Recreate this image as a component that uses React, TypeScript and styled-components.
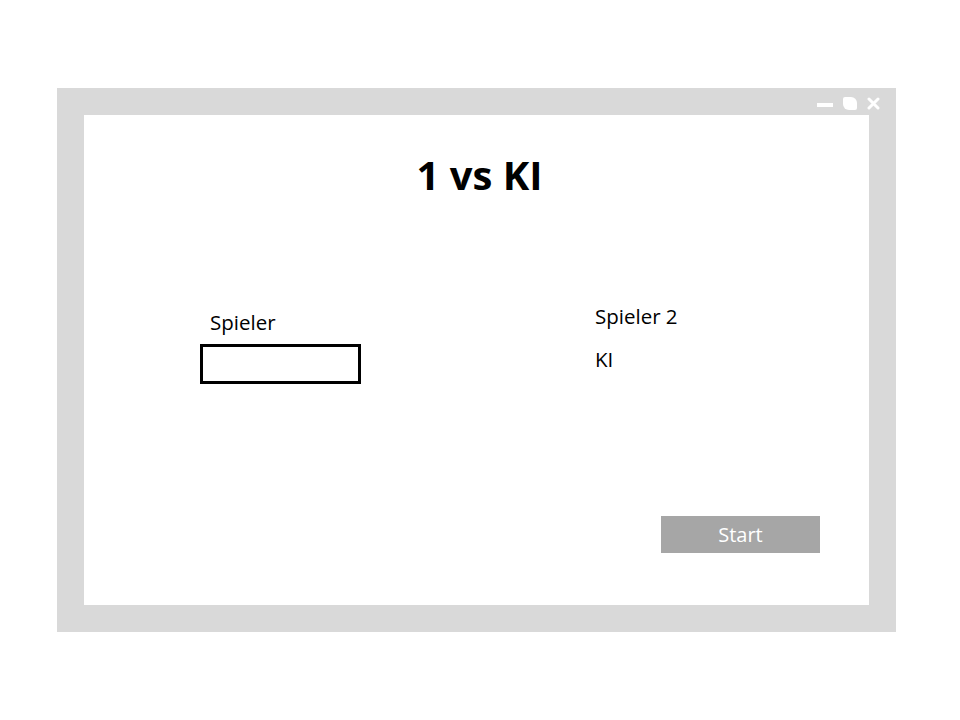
import React from "react";
import styled, { createGlobalStyle } from "styled-components";

const Global = createGlobalStyle`
  html, body { margin: 0; padding: 0; background: #ffffff; }
  body { font-family: "Open Sans", "Liberation Sans", sans-serif; color: #000; }
`;

const Page = styled.div`
  width: 960px;
  height: 720px;
  padding: 88px 0 0 57px;
  box-sizing: border-box;
`;

const Window = styled.div`
  width: 839px;
  height: 544px;
  background: #d9d9d9;
  padding: 0 27px 27px;
  box-sizing: border-box;
  display: flex;
  flex-direction: column;
`;

const TitleBar = styled.div`
  height: 27px;
  display: flex;
  justify-content: flex-end;
  align-items: center;
  gap: 10px;
  padding: 3px 0 0;
  margin-right: -11px;
  box-sizing: border-box;
`;

const Minimize = styled.span`
  width: 16px;
  height: 4px;
  background: #ffffff;
  margin-top: 3px;
`;

const Maximize = styled.span`
  width: 14px;
  height: 13px;
  background: #ffffff;
  border-radius: 2px 6px 2px 6px;
`;

const Content = styled.div`
  flex: 1;
  background: #ffffff;
  display: flex;
  flex-direction: column;
  padding: 33px 49px 52px 0;
  box-sizing: border-box;
`;

const Title = styled.h1`
  margin: 0;
  font-size: 40px;
  font-weight: 700;
  line-height: 54px;
  text-align: center;
  padding-left: 55px;
`;

const Columns = styled.div`
  display: flex;
  margin-top: 100px;
  padding-left: 116px;
`;

const LeftColumn = styled.div`
  width: 395px;
  display: flex;
  flex-direction: column;
  padding-top: 6px;
`;

const RightColumn = styled.div`
  display: flex;
  flex-direction: column;
  gap: 14px;
`;

const Label = styled.span<{ $indent?: number }>`
  font-size: 20.5px;
  line-height: 29px;
  padding-left: ${(p) => p.$indent ?? 0}px;
`;

const NameInput = styled.div`
  width: 161px;
  height: 40px;
  border: 3px solid #000;
  box-sizing: border-box;
  margin-top: 7px;
`;

const Footer = styled.div`
  margin-top: auto;
  display: flex;
  justify-content: flex-end;
`;

const StartButton = styled.button`
  width: 159px;
  height: 37px;
  border: none;
  background: #a6a6a6;
  color: #ffffff;
  font-family: "Open Sans", "Liberation Sans", sans-serif;
  font-size: 20px;
  padding: 0;
`;

export default function App() {
  return (
    <>
      <Global />
      <Page>
        <Window>
          <TitleBar>
            <Minimize />
            <Maximize />
            <svg width="13" height="13" viewBox="0 0 13 13">
              <path d="M2 2 L11 11 M11 2 L2 11" stroke="#fff" strokeWidth="3" strokeLinecap="round" />
            </svg>
          </TitleBar>
          <Content>
            <Title>1 vs KI</Title>
            <Columns>
              <LeftColumn>
                <Label $indent={10}>Spieler</Label>
                <NameInput />
              </LeftColumn>
              <RightColumn>
                <Label>Spieler 2</Label>
                <Label>KI</Label>
              </RightColumn>
            </Columns>
            <Footer>
              <StartButton>Start</StartButton>
            </Footer>
          </Content>
        </Window>
      </Page>
    </>
  );
}
